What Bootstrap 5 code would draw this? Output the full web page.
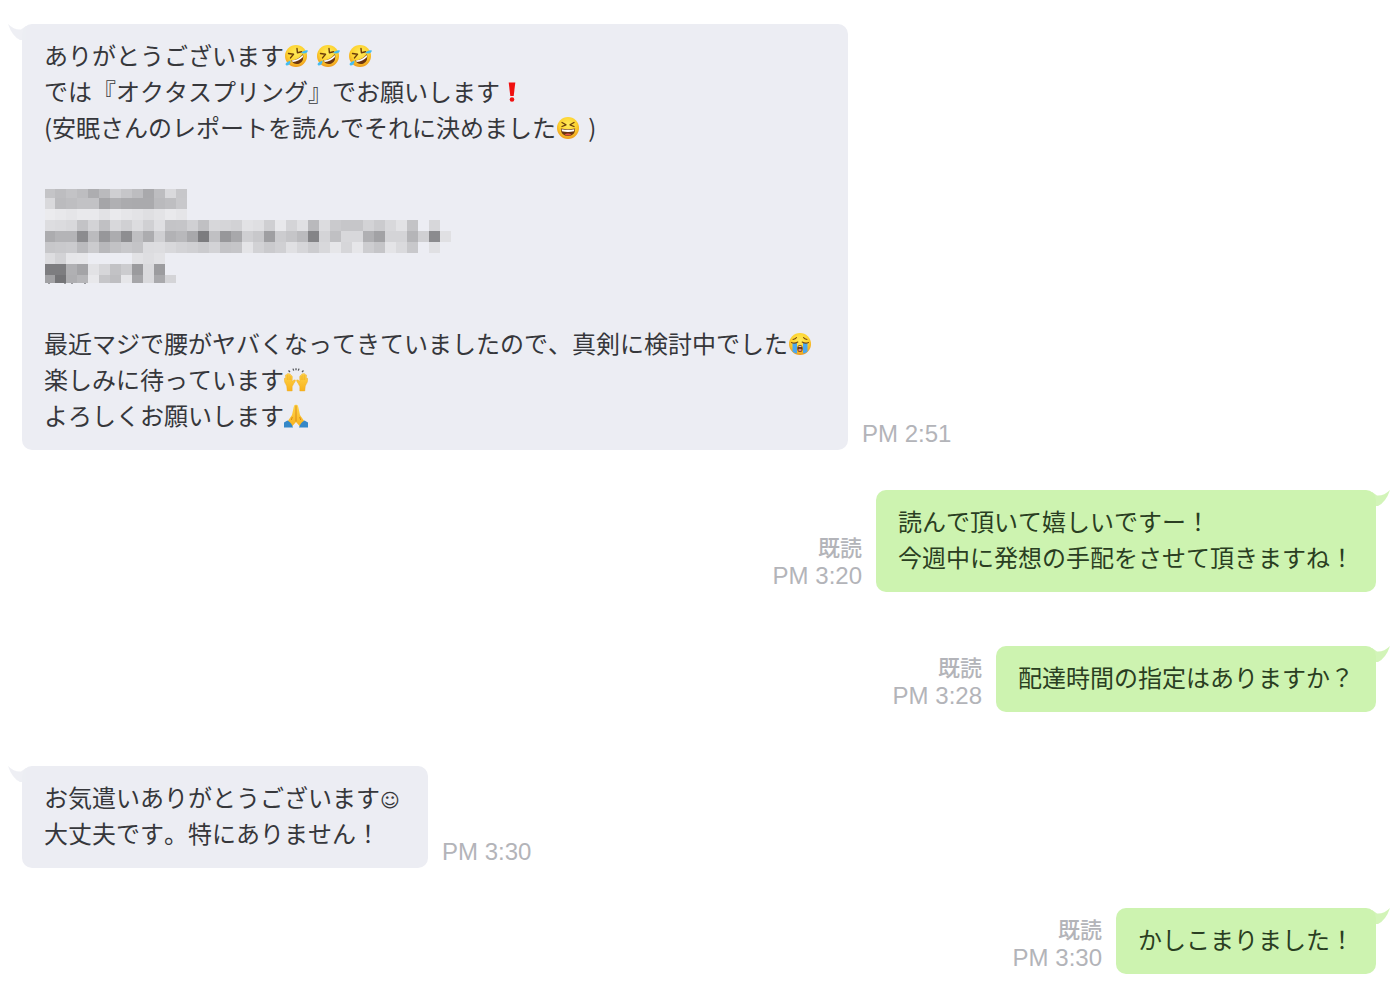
<!DOCTYPE html>
<html lang="ja">
<head>
<meta charset="utf-8">
<meta name="viewport" content="width=device-width, initial-scale=1">
<title>トーク</title>
<link href="https://cdn.jsdelivr.net/npm/bootstrap@5.3.0/dist/css/bootstrap.min.css" rel="stylesheet">
<style>
  body { background: #fff; font-family: "Noto Sans CJK JP", sans-serif; font-kerning: none; }
  .talk { padding: 24px 24px 16px 22px; }
  .msg { gap: 14px; margin-bottom: 40px; }
  .msg.apart { margin-bottom: 54px; }
  .bubble { padding: 13px 22px 17px; border-radius: 10px; font-size: 24px; line-height: 36px; }
  .bubble p { min-height: 36px; }
  .theirs { background: #ecedf3; color: #36373b; --tail: #ecedf3; }
  .mine { background: #cdf3b0; color: #2a3e22; --tail: #cdf3b0; }
  .roomy { padding-right: 28px; }
  .tail { position: absolute; top: 0; width: 18px; height: 16px; fill: var(--tail); }
  .theirs .tail { left: -14px; }
  .mine .tail { right: -14px; transform: scaleX(-1); }
  .stamp { color: #b3b4b9; font-size: 22px; line-height: 28px; padding-bottom: 2px; }
  .stamp span { margin-bottom: 2px; font-weight: 500; }
  .stamp time { font-family: "Liberation Sans", sans-serif; font-size: 24px; }
  .emoji { width: 24px; height: 24px; margin-right: 8px; vertical-align: -3px; }
  .smile { font-family: "DejaVu Sans", sans-serif; font-size: 19px; line-height: 1; display: inline-block; width: 26px; }
  .mosaic { display: block; width: 408px; height: 108px; max-width: 100%; }
</style>
</head>
<body>
<svg width="0" height="0" class="position-absolute" aria-hidden="true">
  <defs>
    <radialGradient id="face" cx=".5" cy=".35" r=".65">
      <stop offset="0" stop-color="#ffec5c"/><stop offset=".6" stop-color="#fdd22f"/><stop offset="1" stop-color="#ee9a1c"/>
    </radialGradient>
    <linearGradient id="skin" x1="0" y1="0" x2="0" y2="1">
      <stop offset="0" stop-color="#ffd54a"/><stop offset="1" stop-color="#f8b21d"/>
    </linearGradient>
    <symbol id="tail" viewBox="0 0 18 16"><path opacity=".9" d="M0 0Q6 6 13 5.500L18 2V16H12Q4 12 0 0Z"/></symbol>
    <symbol id="rofl" viewBox="0 0 24 24">
      <circle cx="12" cy="12" r="11" fill="url(#face)"/>
      <g fill="none" stroke="#6b3d0a" stroke-width="1.400" stroke-linecap="round" stroke-linejoin="round">
        <path d="M4.500 9.500l5 .8-3 3.600M13 4.500l.4 4.300 4.200-1"/>
      </g>
      <path d="M7 16.500Q14 16 19 10Q20.500 17 15.500 19.500Q10.500 21.500 7 16.500Z" fill="#6b3511"/>
      <path d="M7.600 16.600Q14 16 18.800 10.900L19 13Q14.500 17.500 8.800 18Z" fill="#fff"/>
      <path d="M17 9Q20 5.500 24 6.500Q23 10.500 17 9ZM6.500 16.500Q6.500 21.500 2.500 21.500Q-.5 19.500 6.500 16.500Z" fill="#46bdf0"/>
    </symbol>
    <symbol id="laugh" viewBox="0 0 24 24">
      <circle cx="12" cy="12" r="11" fill="url(#face)"/>
      <g fill="none" stroke="#6b3d0a" stroke-width="1.300" stroke-linecap="round" stroke-linejoin="round">
        <path d="M6 6.500l4 2.300-4 1.700M18 6.500l-4 2.300 4 1.700"/>
      </g>
      <path d="M4.800 12.500Q12 14 19.200 12.500Q19 20 12 20T4.800 12.500Z" fill="#6b3511"/>
      <path d="M5.600 13.200Q12 14.500 18.400 13.200L18 15.300Q12 16.800 6 15.300Z" fill="#fff"/>
      <path d="M8.500 18.500Q12 16.500 15.500 18.500Q12 20.500 8.500 18.500Z" fill="#e8524a"/>
    </symbol>
    <symbol id="bang" viewBox="0 0 24 24">
      <path d="M8.700 2.500h6.600L13.700 16h-3.400Z" fill="#f01010"/><circle cx="12" cy="19.500" r="2.300" fill="#f01010"/>
    </symbol>
    <symbol id="sob" viewBox="0 0 24 24">
      <circle cx="12" cy="12" r="11" fill="url(#face)"/>
      <path d="M4.500 11H9V21.500Q6.500 21.500 4.500 19.500ZM15 11h4.500v8.500Q17.500 21.500 15 21.500Z" fill="#4aa8ee"/>
      <path d="M3.500 10.500Q6.500 12 9.800 10M14.200 10Q17.500 12 20.500 10.500M5 7.500Q7.500 7 8.500 5.500M19 7.500Q16.500 7 15.500 5.500" fill="none" stroke="#7a4a10" stroke-width="1.100" stroke-linecap="round"/>
      <ellipse cx="12" cy="16.500" rx="2.700" ry="3.500" fill="#6b3511"/>
      <path d="M10 14.800Q12 12.800 14 14.800Z" fill="#fff"/>
      <ellipse cx="12" cy="18" rx="1.700" ry="1.300" fill="#e0897b"/>
    </symbol>
    <symbol id="hands" viewBox="0 0 24 24">
      <path id="palm" d="M3.200 23L2.700 18Q-.2 14 .2 10.500Q.8 9.600 1.600 11L1.500 7Q2.200 5.800 3 7L3.300 5.800Q4.200 4.700 4.900 6L5.600 5.800Q6.700 5.800 6.800 7.500L7.600 7.500Q8.600 8 8.300 10L8.200 13.500Q10 11.300 11.400 12Q11.700 13.300 9.800 15.500Q8.800 17.500 8.200 18.600V23Z" fill="url(#skin)" stroke="#eda71b" stroke-width=".4"/>
      <use href="#palm" transform="matrix(-1 0 0 1 24 0)"/>
      <path d="M3.300 7v5M5.100 7v5M6.800 8v4M20.700 7v5M18.900 7v5M17.200 8v4" stroke="#e9a019" stroke-width=".5"/>
      <path d="M4.500 2.500L6 4M9 .6l.7 2M12 .2v2M15 .6l-.7 2M19.500 2.500L18 4" stroke="#55575b" stroke-width="1.300" fill="none"/>
    </symbol>
    <symbol id="pray" viewBox="0 0 24 24">
      <path d="M12 .8Q10 .4 9.700 3L8 11L3.500 17.500L8 22.500L12 18L16 22.500L20.500 17.500L16 11L14.300 3Q14 .4 12 .8Z" fill="url(#skin)"/>
      <path d="M12 1.500V17.500M8.300 13l-1 3M15.700 13l1 3" stroke="#cf7e12" stroke-width=".8" fill="none"/>
      <path d="M3.500 16.500Q7.500 18.500 9 23.400H0V18.500ZM20.500 16.500Q16.500 18.500 15 23.400H24V18.500Z" fill="#3588c8"/>
    </symbol>
  </defs>
</svg>

<main class="talk container-fluid d-flex flex-column">
  <article class="msg d-flex align-items-end">
    <div class="bubble theirs roomy position-relative">
      <svg class="tail" aria-hidden="true"><use href="#tail"/></svg>
      <p class="mb-0">ありがとうございます<svg class="emoji" role="img" aria-label="大笑い"><use href="#rofl"/></svg><svg class="emoji" role="img" aria-label="大笑い"><use href="#rofl"/></svg><svg class="emoji" role="img" aria-label="大笑い"><use href="#rofl"/></svg></p>
      <p class="mb-0">では『オクタスプリング』でお願いします<svg class="emoji" role="img" aria-label="びっくり"><use href="#bang"/></svg></p>
      <p class="mb-0">(安眠さんのレポートを読んでそれに決めました<svg class="emoji" role="img" aria-label="笑顔"><use href="#laugh"/></svg>)</p>
      <p class="mb-0"></p>
      <svg class="mosaic" id="mosaic" viewBox="0 0 408 108" role="img" aria-label="伏せ字"></svg>
      <p class="mb-0"></p>
      <p class="mb-0">最近マジで腰がヤバくなってきていましたので、真剣に検討中でした<svg class="emoji" role="img" aria-label="号泣"><use href="#sob"/></svg></p>
      <p class="mb-0">楽しみに待っています<svg class="emoji" role="img" aria-label="万歳"><use href="#hands"/></svg></p>
      <p class="mb-0">よろしくお願いします<svg class="emoji" role="img" aria-label="お願い"><use href="#pray"/></svg></p>
    </div>
    <div class="stamp text-nowrap"><time class="d-block">PM 2:51</time></div>
  </article>

  <article class="msg apart d-flex align-items-end justify-content-end">
    <div class="stamp text-nowrap text-end"><span class="d-block">既読</span><time class="d-block">PM 3:20</time></div>
    <div class="bubble mine position-relative">
      <svg class="tail" aria-hidden="true"><use href="#tail"/></svg>
      <p class="mb-0">読んで頂いて嬉しいですー！</p>
      <p class="mb-0">今週中に発想の手配をさせて頂きますね！</p>
    </div>
  </article>

  <article class="msg apart d-flex align-items-end justify-content-end">
    <div class="stamp text-nowrap text-end"><span class="d-block">既読</span><time class="d-block">PM 3:28</time></div>
    <div class="bubble mine position-relative">
      <svg class="tail" aria-hidden="true"><use href="#tail"/></svg>
      <p class="mb-0">配達時間の指定はありますか？</p>
    </div>
  </article>

  <article class="msg d-flex align-items-end">
    <div class="bubble theirs position-relative">
      <svg class="tail" aria-hidden="true"><use href="#tail"/></svg>
      <p class="mb-0">お気遣いありがとうございます<span class="smile">☺</span></p>
      <p class="mb-0">大丈夫です。特にありません！</p>
    </div>
    <div class="stamp text-nowrap"><time class="d-block">PM 3:30</time></div>
  </article>

  <article class="msg mb-0 d-flex align-items-end justify-content-end">
    <div class="stamp text-nowrap text-end"><span class="d-block">既読</span><time class="d-block">PM 3:30</time></div>
    <div class="bubble mine position-relative">
      <svg class="tail" aria-hidden="true"><use href="#tail"/></svg>
      <p class="mb-0">かしこまりました！</p>
    </div>
  </article>
</main>

<script src="https://cdn.jsdelivr.net/npm/bootstrap@5.3.0/dist/js/bootstrap.bundle.min.js"></script>
<script>
  // Grey level of each mosaic cell, row by row; "--" leaves the bubble showing.
  const rows = [
    "c4 bd c3 bd ad ba cf c6 bd a9 bd d9 c7",
    "d9 bb be c2 c2 a5 b0 ab aa aa ba be c8",
    "eb e8 e5 e9 e9 e2 ea e6 e3 df e3 e9 e5",
    "dd db d8 c3 d3 c0 d8 d0 dc d0 df c4 c5 d0 c0 d7 d5 d2 e2 df cf e8 d4 e0 b9 dc ca c6 c6 d3 cb d8 e2 c3 -- d7",
    "ac b4 b4 8c bb 97 ac 8e bf ac cf b2 b8 a8 7c c0 97 a8 cf c8 9f cc c5 bb 84 d4 c0 d8 d8 b0 a2 d4 d4 b5 d0 8b e0",
    "c7 c9 cb bb cb b8 c2 c8 c4 dc dd d8 d3 d0 cb d3 c3 c5 e4 d2 ca d0 e0 d6 cc d8 e6 d6 e6 cd c5 e4 da c8 -- e0",
    "dd d3 e6 e7 -- -- -- -- e2 de e2",
    "7d 7d b0 a4 e2 d6 c2 cc 9b da 9c",
    "a1 74 ae b6 e8 c6 be e6 a6 da a9 d4"
  ];
  const ns = "http://www.w3.org/2000/svg", box = document.getElementById("mosaic");
  function cell(x, y, w, h, fill) {
    const r = document.createElementNS(ns, "rect");
    Object.entries({ x, y, width: w, height: h, fill }).forEach(([k, v]) => r.setAttribute(k, v));
    box.append(r);
  }
  rows.forEach((row, j) => row.split(" ").forEach((g, i) => {
    if (g === "--") return;
    const v = parseInt(g, 16);
    cell(i ? i * 11 : 1, j ? 6 + j * 11 : 8, i ? 11 : 10, j === 0 ? 9 : j === 8 ? 8 : 11,
      `rgb(${v},${v},${Math.min(v + 3, 243)})`);
  }));
  [4, 20, 27, 40].forEach(x => cell(x, 102, 2, 1, "#999a9e"));
</script>
</body>
</html>
